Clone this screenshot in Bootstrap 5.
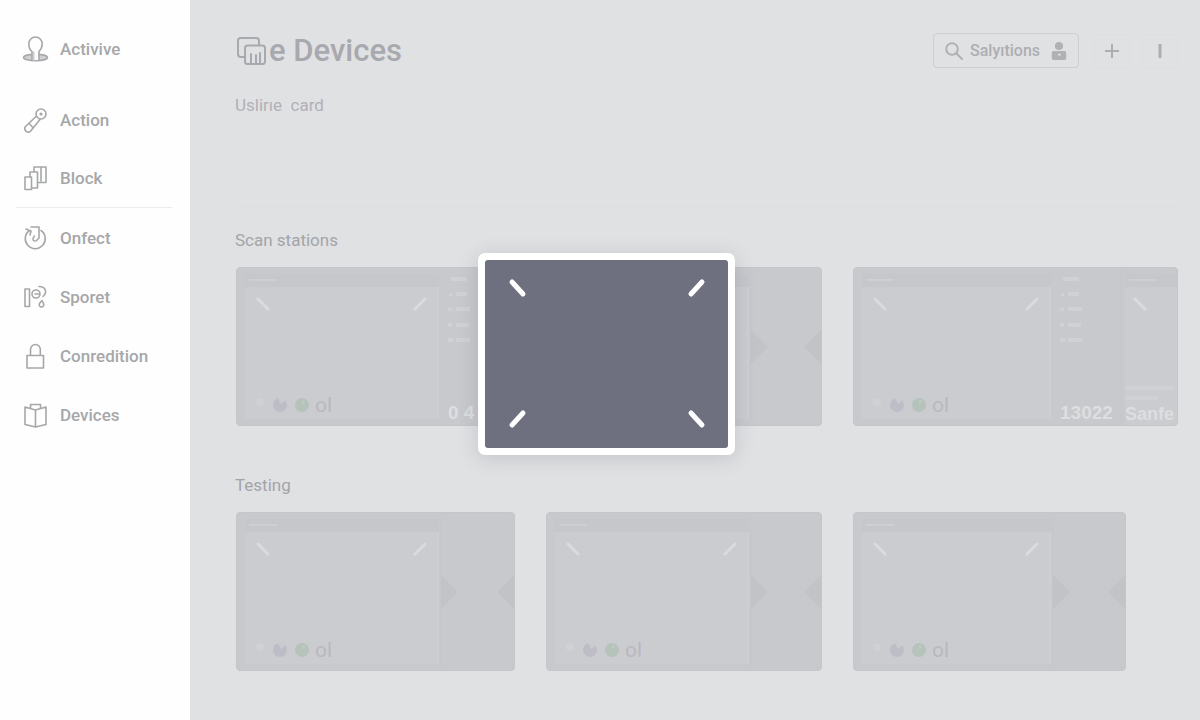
<!DOCTYPE html>
<html lang="en">
<head>
<meta charset="utf-8">
<meta name="viewport" content="width=device-width, initial-scale=1">
<title>Devices</title>
<link rel="stylesheet" href="https://cdn.jsdelivr.net/npm/bootstrap@5.3.0/dist/css/bootstrap.min.css">
<style>
body{font-family:Roboto,"Liberation Sans",sans-serif;background:#e0e1e3;color:#a3a4a9}
.side-bar{flex:0 0 190px;background:#fefefe;padding:19px 18px 0 16px}
.side-bar a{height:59px;padding-left:6px;gap:11px;color:#a6a7a9;font-size:17px;font-weight:500;line-height:20px}
.side-bar svg{width:27px;height:28px;flex:none}
.first-item{margin-bottom:12px}
.side-bar .ruled{border-bottom:1px solid #ececed}
.side-bar .ruled a{height:58px}
.line-art{fill:none;stroke:currentColor;stroke-width:1.6;stroke-linecap:round;stroke-linejoin:round}
.page-area{padding:33px 22px 24px 46px;min-width:0}
.page-title{font-size:31px;line-height:34px;font-weight:500;color:#a8a9af}
.page-title svg{width:32px;height:30px;margin-right:1px;stroke-width:2}
.find-box{width:146px;height:35px;border:1px solid #cdced2;border-radius:4px;padding:0 10px 0 11px;gap:7px;color:#b0b1b5}
.find-box input{border:0;background:none;padding:0;color:#adaeb2;font-size:16px;font-weight:500;outline:0;min-width:0}
.find-box svg{width:18px;height:18px;flex:none}
.find-box .lens{stroke-width:2}
.tool-btn{width:36px;height:34px;border:1px solid #dddee0;color:#adaeb2;padding:0}
.tool-set{gap:12px;margin-left:15px}
.intro{height:120px;padding-top:8px;margin:19px 0 0 -1px;font-size:17px;line-height:20px;color:#b0b1b6;border-bottom:1px solid #dddee0}
.group-title{font-size:17px;line-height:20px;font-weight:400;color:#a3a4a9;margin:0 0 17px -1px}
.first-group{margin-top:23px}
.second-group{margin-top:49px}
.station-grid{display:grid;grid-template-columns:279fr 276fr 325fr;gap:31px}
.station{height:159px;border-radius:4px;background:#c8c9cd;overflow:hidden;display:flex;color:#dcdde0;border:1px solid #c5c6ca}
.narrow{width:84%}
.display{flex:0 0 194px;margin:6px 0 6px 8px;display:flex;flex-direction:column}
.display.cut{flex:1 0 50px;margin-left:3px;overflow:hidden}
.strip{height:13px;background:#c6c7cb;padding:5px 4px}
.strip::before{content:"";display:block;width:28px;height:2px;background:#cecfd2}
.glass{flex:1;background:#cbccd0;border-right:2px solid #cecfd2;display:flex;flex-direction:column;justify-content:space-between;padding:10px 10px 2px 11px}
.tick{width:14px;height:14px;stroke:#dadbde;stroke-width:3;stroke-linecap:round}
.marks{gap:5px;height:24px}
.marks svg{width:54px;height:18px}
.marks span{font-size:21px;line-height:24px;color:#b8b9be}
.pane{flex:1;min-width:0;display:flex;justify-content:space-between;align-items:center;border-left:1px solid #c6c7cb;margin-left:1px}
.pane svg{width:17px;height:34px;fill:#c2c3c7}
.wide-card .display{flex-basis:189px}
.wide-card .display.cut{flex-basis:50px}
.info{flex:0 0 71px;display:flex;flex-direction:column;justify-content:space-between;padding:8px 0 1px 9px;border-right:1px solid #c5c6ca}
.info svg{width:30px;height:72px;fill:#d0d1d4}
.big-word{font:700 19px/22px "Liberation Sans",Arial,sans-serif;color:#dddee0;white-space:nowrap}
.cut .big-word{font-size:18px}
.scan-layer{position:fixed;inset:0;padding:0 0 12px 13px;pointer-events:none}
.scan-box{width:257px;height:202px;border:7px solid #fff;border-radius:7px;background:#fff;box-shadow:0 3px 20px rgba(80,82,95,.2)}
.scan-box svg{display:block;width:100%;height:100%;background:#6e7080;border-radius:3px;stroke:#fff;stroke-width:5;stroke-linecap:round}
</style>
</head>
<body>
<svg class="d-none" aria-hidden="true">
<symbol id="t-down" viewBox="0 0 14 14"><path d="M2 2L12 12"/></symbol>
<symbol id="t-up" viewBox="0 0 14 14"><path d="M2 12L12 2"/></symbol>
<symbol id="dots" viewBox="0 0 54 18"><circle cx="4" cy="6" r="4" fill="#d0d1d4"/><circle cx="24" cy="9" r="7" fill="#bcbdc7"/><path d="M22 2l3 6 5-4-3-2z" fill="#cacbd0"/><circle cx="46" cy="9" r="7" fill="#b5c3ba"/><path d="M46 4v5l4-4z" fill="#becac2"/></symbol>
<symbol id="rows" viewBox="0 0 30 72"><path d="M3 1h16v4H3zM1 17h3v3H1zM8 16h11v4H8zM0 32h4v3H0zM8 31h14v4H8zM0 47h4v4H0zM8 47h13v4H8zM0 62h5v4H0zM8 62h14v4H8z"/></symbol>
<symbol id="a-right" viewBox="0 0 17 34"><path d="M0 0l17 17L0 34z"/></symbol>
<symbol id="a-left" viewBox="0 0 17 34"><path d="M17 0L0 17l17 17z"/></symbol>
</svg>
<div class="d-flex min-vh-100">
<nav class="side-bar">
<ul class="list-unstyled m-0">
<li class="first-item"><a class="d-flex align-items-center text-decoration-none" href="#"><svg class="line-art" viewBox="0 0 27 28"><ellipse cx="13.500" cy="22.500" rx="12" ry="3.200" fill="#d0d1d3"/><path d="M10 25v-8.500C7.500 14.500 6.800 12 6.800 8.700a6.700 6.700 0 0 1 13.400 0c0 3.300-1.200 5.800-3.200 7.800V25" fill="#fefefe"/><path d="M11.800 17v8" stroke="#d0d0d2"/></svg>Activive</a></li>
<li><a class="d-flex align-items-center text-decoration-none" href="#"><svg class="line-art" viewBox="0 0 27 28"><circle cx="19" cy="8" r="5"/><circle cx="19" cy="8" r=".8"/><path d="M14.500 10L3.500 20.500a3.500 3.500 0 0 0 5 4.800L18 13.500M7 17.500l4 4"/></svg>Action</a></li>
<li class="ruled"><a class="d-flex align-items-center text-decoration-none" href="#"><svg class="line-art" viewBox="0 0 27 28"><path d="M3 13h6.500v12.500H3zM8 12.500V8h7.500v16h-5M12 7.500V3h12v15.500h-8M19 4v13"/></svg>Block</a></li>
<li><a class="d-flex align-items-center text-decoration-none" href="#"><svg class="line-art" viewBox="0 0 27 28"><path d="M7.500 6.500A10 10 0 1 0 19 6.500M4 5l5 2-1 4M9 3h8v11l-3 3M12.500 12c-2 2-2 4 0 5"/></svg>Onfect</a></li>
<li><a class="d-flex align-items-center text-decoration-none" href="#"><svg class="line-art" viewBox="0 0 27 28"><path d="M3 6h4.500v17.500H3zM17 3.500c7 0 8.500 6 4 10M13 11h4M20 17.500l-2.500 3a2.300 2.300 0 1 0 4 0z"/><circle cx="14" cy="11" r="4"/></svg>Sporet</a></li>
<li><a class="d-flex align-items-center text-decoration-none" href="#"><svg class="line-art" viewBox="0 0 27 28"><path d="M5 13.500h16.500V26H5zM8.500 13V7.500a4.900 5 0 0 1 9.800 0V13"/></svg>Conredition</a></li>
<li><a class="d-flex align-items-center text-decoration-none" href="#"><svg class="line-art" viewBox="0 0 27 28"><path d="M3 6l10.500 3L24 6v17.500l-10.500 2.500L3 23.500zM13.500 9v17M8.500 7V3.500h10V7"/></svg>Devices</a></li>
</ul>
</nav>
<main class="page-area flex-grow-1">
<header class="d-flex justify-content-between align-items-center">
<h1 class="page-title d-flex align-items-center m-0"><svg class="line-art" viewBox="0 0 32 30"><path d="M9 21H5a3 3 0 0 1-3-3V5a3 3 0 0 1 3-3h15a3 3 0 0 1 3 3v4"/><rect x="9" y="9.500" width="20" height="18.500" rx="2.500"/><path d="M15 27v-9M20 27v-8M24 27V17"/></svg>e Devices</h1>
<div class="d-flex align-items-center">
<label class="find-box d-flex align-items-center"><svg class="line-art lens" viewBox="0 0 18 18"><circle cx="7" cy="7" r="5.800"/><path d="M11.500 11.500L17 17"/></svg><input class="w-100" type="text" value="Salyıtions" aria-label="Search"><svg viewBox="0 0 18 20" fill="currentColor"><circle cx="9" cy="4.500" r="4.500"/><path d="M3 10h12a2 2 0 0 1 2 2v6a2 2 0 0 1-2 2H3a2 2 0 0 1-2-2v-6a2 2 0 0 1 2-2z"/><path d="M8 13h3v2H8z" fill="#dfe0e2"/></svg></label>
<div class="tool-set d-flex">
<button class="tool-btn btn d-flex align-items-center justify-content-center" type="button" aria-label="Add"><svg width="14" height="14" stroke="currentColor" stroke-width="2"><path d="M7 0v14M0 7h14"/></svg></button>
<button class="tool-btn btn d-flex align-items-center justify-content-center" type="button" aria-label="More"><svg width="4" height="14" stroke="currentColor" stroke-width="3"><path d="M2 0v14"/></svg></button>
</div>
</div>
</header>
<p class="intro">Uslirıe&nbsp; card</p>

<section class="first-group">
<h2 class="group-title">Scan stations</h2>
<div class="station-grid">
<div class="station"><div class="display"><div class="strip"></div><div class="glass"><div class="d-flex justify-content-between"><svg class="tick"><use href="#t-down"/></svg><svg class="tick"><use href="#t-up"/></svg></div><div class="marks d-flex align-items-center"><svg><use href="#dots"/></svg><span>ol</span></div></div></div><div class="info"><svg><use href="#rows"/></svg><span class="big-word">0 4</span></div></div>
<div class="station"><div class="display"><div class="strip"></div><div class="glass"></div></div><div class="pane"><svg><use href="#a-right"/></svg><svg><use href="#a-left"/></svg></div></div>
<div class="station wide-card"><div class="display"><div class="strip"></div><div class="glass"><div class="d-flex justify-content-between"><svg class="tick"><use href="#t-down"/></svg><svg class="tick"><use href="#t-up"/></svg></div><div class="marks d-flex align-items-center"><svg><use href="#dots"/></svg><span>ol</span></div></div></div><div class="info"><svg><use href="#rows"/></svg><span class="big-word">13022</span></div>
<div class="display cut mb-0"><div class="strip"></div><div class="glass border-0 px-0 pb-0"><svg class="tick ms-2"><use href="#t-down"/></svg><div><svg class="d-block" width="50" height="18" fill="#d0d1d4"><path d="M0 1h50v4H0zM0 11h33v4H0z"/></svg><span class="big-word d-block">Sanfe</span></div></div></div></div>
</div>
</section>

<section class="second-group">
<h2 class="group-title">Testing</h2>
<div class="station-grid">
<div class="station"><div class="display"><div class="strip"></div><div class="glass"><div class="d-flex justify-content-between"><svg class="tick"><use href="#t-down"/></svg><svg class="tick"><use href="#t-up"/></svg></div><div class="marks d-flex align-items-center"><svg><use href="#dots"/></svg><span>ol</span></div></div></div><div class="pane"><svg><use href="#a-right"/></svg><svg><use href="#a-left"/></svg></div></div>
<div class="station"><div class="display"><div class="strip"></div><div class="glass"><div class="d-flex justify-content-between"><svg class="tick"><use href="#t-down"/></svg><svg class="tick"><use href="#t-up"/></svg></div><div class="marks d-flex align-items-center"><svg><use href="#dots"/></svg><span>ol</span></div></div></div><div class="pane"><svg><use href="#a-right"/></svg><svg><use href="#a-left"/></svg></div></div>
<div class="station wide-card narrow"><div class="display"><div class="strip"></div><div class="glass"><div class="d-flex justify-content-between"><svg class="tick"><use href="#t-down"/></svg><svg class="tick"><use href="#t-up"/></svg></div><div class="marks d-flex align-items-center"><svg><use href="#dots"/></svg><span>ol</span></div></div></div><div class="pane"><svg><use href="#a-right"/></svg><svg><use href="#a-left"/></svg></div></div>
</div>
</section>
</main>
</div>
<div class="scan-layer d-flex align-items-center justify-content-center">
<div class="scan-box"><svg viewBox="0 0 243 188" aria-label="Scan frame"><path d="M27 22L38 34M217 22L206 34M27 165L38 153M217 165L206 153"/></svg></div>
</div>
<script src="https://cdn.jsdelivr.net/npm/bootstrap@5.3.0/dist/js/bootstrap.bundle.min.js"></script>
</body>
</html>
